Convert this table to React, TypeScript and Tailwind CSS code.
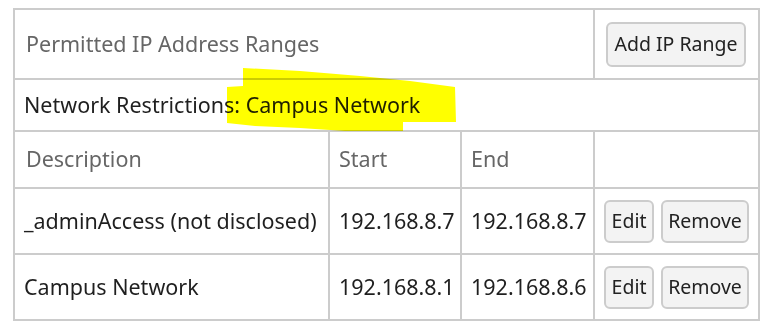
import { JSX } from "react";

interface IpRange {
  description: string;
  start: string;
  end: string;
}

const ranges: IpRange[] = [
  { description: "_adminAccess (not disclosed)", start: "192.168.8.7", end: "192.168.8.7" },
  { description: "Campus Network", start: "192.168.8.1", end: "192.168.8.6" },
];

const cell = "border-2 border-[#cccccc] px-[9px] align-middle";
const btn =
  "rounded-[6px] border-2 border-[#cccccc] bg-[#f3f3f3] text-[19.5px] text-[#222222] leading-none";

export default function App(): JSX.Element {
  return (
    <div
      className="relative w-[780px] h-[335px] bg-white text-[21.5px] text-[#1f1f1f]"
      style={{ fontFamily: '"Noto Sans", "Open Sans", sans-serif' }}
    >
      <table className="absolute left-[13px] top-[8px] w-[745px] table-fixed border-collapse">
        <colgroup>
          <col className="w-[315px]" />
          <col className="w-[132px]" />
          <col className="w-[133px]" />
          <col className="w-[165px]" />
        </colgroup>
        <tbody>
          <tr className="h-[70px]">
            <td colSpan={3} className={`${cell} px-[11px] text-[#666666]`}>
              Permitted IP Address Ranges
            </td>
            <td className={`${cell} px-[11px]`}>
              <button className={`${btn} h-[45px] w-[140px] pb-px`}>Add IP Range</button>
            </td>
          </tr>
          <tr className="h-[52px]">
            <td colSpan={4} className={cell}>
              Network Restrictions: Campus Network
            </td>
          </tr>
          <tr className="h-[57px] text-[#666666]">
            <td className={`${cell} px-[11px]`}>Description</td>
            <td className={cell}>Start</td>
            <td className={cell}>End</td>
            <td className={cell}></td>
          </tr>
          {ranges.map((r) => (
            <tr key={r.description} className="h-[66px]">
              <td className={`${cell} px-[7px]`}>{r.description}</td>
              <td className={cell}>{r.start}</td>
              <td className={cell}>{r.end}</td>
              <td className={`${cell} px-[6px]`}>
                <div className="flex gap-[7px]">
                  <button className={`${btn} h-[43px] w-[50px] pb-px`}>Edit</button>
                  <button className={`${btn} h-[43px] w-[88px] pb-px`}>Remove</button>
                </div>
              </td>
            </tr>
          ))}
        </tbody>
      </table>

      {/* marker highlight over the restriction name */}
      <svg
        className="pointer-events-none absolute left-0 top-0 mix-blend-multiply"
        width="780"
        height="335"
      >
        <polygon
          fill="#ffff00"
          points="243,68 300,71 360,76 410,81 455,87 456,122 403,122 403,131 345,131 300,128 255,126 227,123 227,87 243,86"
        />
      </svg>
    </div>
  );
}
